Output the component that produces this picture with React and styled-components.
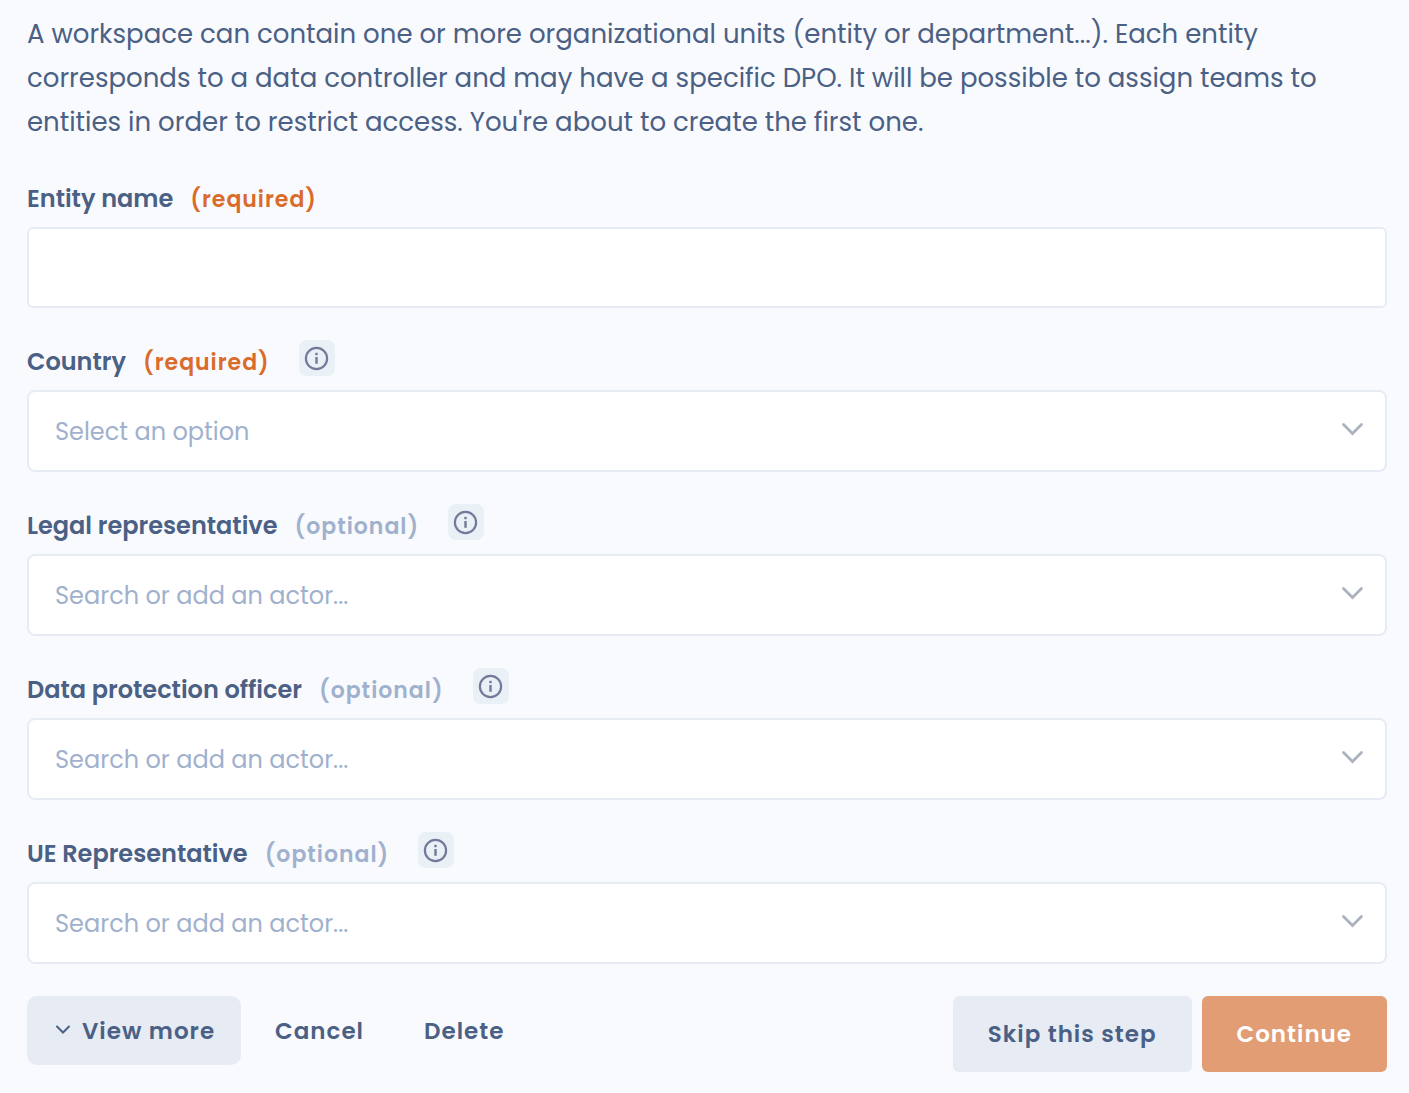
import React from "react";
import styled, { createGlobalStyle } from "styled-components";

const colors = {
  page: "#f9fafe",
  text: "#4a6084",
  muted: "#9fb1cd",
  required: "#d96b2b",
  line: "#e6ebf4",
  accent: "#e29d75",
};

const GlobalStyle = createGlobalStyle`
  *, *::before, *::after { box-sizing: border-box; }
  body {
    margin: 0;
    background: ${colors.page};
    color: ${colors.text};
    font-family: Poppins, Inter, "Open Sans", sans-serif;
  }
  button, input, select { font-family: inherit; }
`;

const Form = styled.form`
  display: flex;
  flex-direction: column;
  gap: 32px;
  padding: 12px 22px 20px 27px;
`;

const Intro = styled.p`
  margin: 0 0 1px;
  font-size: 26px;
  line-height: 44px;
`;

const Field = styled.div`
  display: flex;
  flex-direction: column;
`;

const FieldHeader = styled.div`
  display: flex;
  align-items: flex-start;
  height: 50px;
`;

const Label = styled.label`
  display: flex;
  align-items: baseline;
  gap: 17px;
  font-size: 24px;
  font-weight: 600;
  line-height: 44px;
  white-space: nowrap;
`;

const Tag = styled.span`
  color: ${(p) => (p.$required ? colors.required : colors.muted)};
  font-size: 22px;
  letter-spacing: 1px;
`;

const InfoButton = styled.button`
  display: grid;
  place-items: center;
  width: 36px;
  height: 36px;
  margin: 0 0 0 29px;
  padding: 0;
  border: 0;
  border-radius: 8px;
  background: #e9f0f6;
  color: #74799a;
  cursor: pointer;
`;

const Control = styled.div`
  position: relative;
  display: flex;
`;

const Input = styled.input`
  flex: 1;
  min-width: 0;
  height: 81px;
  padding: 0 64px 0 26px;
  border: 2px solid ${colors.line};
  border-radius: 6px;
  background: #fff;
  color: ${colors.text};
  font-size: 24px;
  outline-color: ${colors.muted};
  &::placeholder { color: ${colors.muted}; opacity: 1; }
`;

const Combobox = styled(Input)`
  height: 82px;
  border-radius: 8px;
`;

const Select = styled(Combobox).attrs({ as: "select" })`
  appearance: none;
  color: ${colors.muted};
`;

const Arrow = styled.svg`
  position: absolute;
  top: 31px;
  right: 22px;
  pointer-events: none;
`;

const Footer = styled.div`
  display: flex;
  flex-wrap: wrap;
  justify-content: space-between;
  gap: 10px;
`;

const Group = styled.div`
  display: flex;
  align-items: flex-start;
  gap: ${(p) => p.$gap}px;
`;

const Button = styled.button`
  display: flex;
  align-items: center;
  gap: 11px;
  height: ${(p) => (p.$large ? 76 : 69)}px;
  padding: 0 ${(p) => (p.$large ? 35 : 26)}px;
  border: 0;
  border-radius: ${(p) => (p.$large ? 6 : 10)}px;
  background: ${(p) => p.$background || "transparent"};
  color: ${(p) => p.$color || colors.text};
  font-size: 23px;
  font-weight: 600;
  letter-spacing: 1px;
  white-space: nowrap;
  cursor: pointer;
`;

const InfoIcon = () => (
  <svg width="26" height="26" viewBox="0 0 26 26" fill="none" aria-hidden="true">
    <circle cx="12.5" cy="13.5" r="10.6" stroke="currentColor" strokeWidth="2.2" />
    <path d="M12.5 12v6.8" stroke="currentColor" strokeWidth="2.4" />
    <path d="M12.5 7.8v2.4" stroke="currentColor" strokeWidth="2.4" />
  </svg>
);

const SelectArrow = () => (
  <Arrow width="24" height="16" viewBox="0 0 24 16" fill="none" aria-hidden="true">
    <path d="M2.5 3.5l9 9 9-9" stroke="#a9b2bd" strokeWidth="2.8" strokeLinecap="round" />
  </Arrow>
);

const SmallChevron = () => (
  <svg width="18" height="12" viewBox="0 0 18 12" fill="none" aria-hidden="true">
    <path d="M4 1.5l6 6 6-6" stroke="currentColor" strokeWidth="2" strokeLinecap="round" />
  </svg>
);

const actorPlaceholder = "Search or add an actor...";

const fields = [
  { id: "entity-name", label: "Entity name", required: true, type: "text" },
  { id: "country", label: "Country", required: true, info: true, type: "select", placeholder: "Select an option" },
  { id: "legal", label: "Legal representative", info: true, type: "search", placeholder: actorPlaceholder },
  { id: "dpo", label: "Data protection officer", info: true, type: "search", placeholder: actorPlaceholder },
  { id: "ue", label: "UE Representative", info: true, type: "search", placeholder: actorPlaceholder },
];

function FormField({ id, label, required, info, type, placeholder }) {
  return (
    <Field>
      <FieldHeader>
        <Label htmlFor={id}>
          {label}
          <Tag $required={required}>{required ? "(required)" : "(optional)"}</Tag>
        </Label>
        {info && (
          <InfoButton type="button" aria-label={`About ${label}`}>
            <InfoIcon />
          </InfoButton>
        )}
      </FieldHeader>
      <Control>
        {type === "text" && <Input id={id} type="text" />}
        {type === "select" && (
          <Select id={id} defaultValue="">
            <option value="">{placeholder}</option>
          </Select>
        )}
        {type === "search" && (
          <Combobox id={id} type="text" placeholder={placeholder} role="combobox" aria-expanded={false} />
        )}
        {type !== "text" && <SelectArrow />}
      </Control>
    </Field>
  );
}

export default function App() {
  return (
    <>
      <GlobalStyle />
      <Form onSubmit={(e) => e.preventDefault()}>
        <Intro>
          A workspace can contain one or more organizational units (entity or department...). Each entity
          corresponds to a data controller and may have a specific DPO. It will be possible to assign teams to
          entities in order to restrict access. You're about to create the first one.
        </Intro>
        {fields.map((f) => (
          <FormField key={f.id} {...f} />
        ))}
        <Footer>
          <Group $gap={8}>
            <Button type="button" $background={colors.line}>
              <SmallChevron />
              View more
            </Button>
            <Button type="button">Cancel</Button>
            <Button type="button">Delete</Button>
          </Group>
          <Group $gap={10}>
            <Button type="button" $large $background={colors.line}>Skip this step</Button>
            <Button type="submit" $large $background={colors.accent} $color="#fff">Continue</Button>
          </Group>
        </Footer>
      </Form>
    </>
  );
}
